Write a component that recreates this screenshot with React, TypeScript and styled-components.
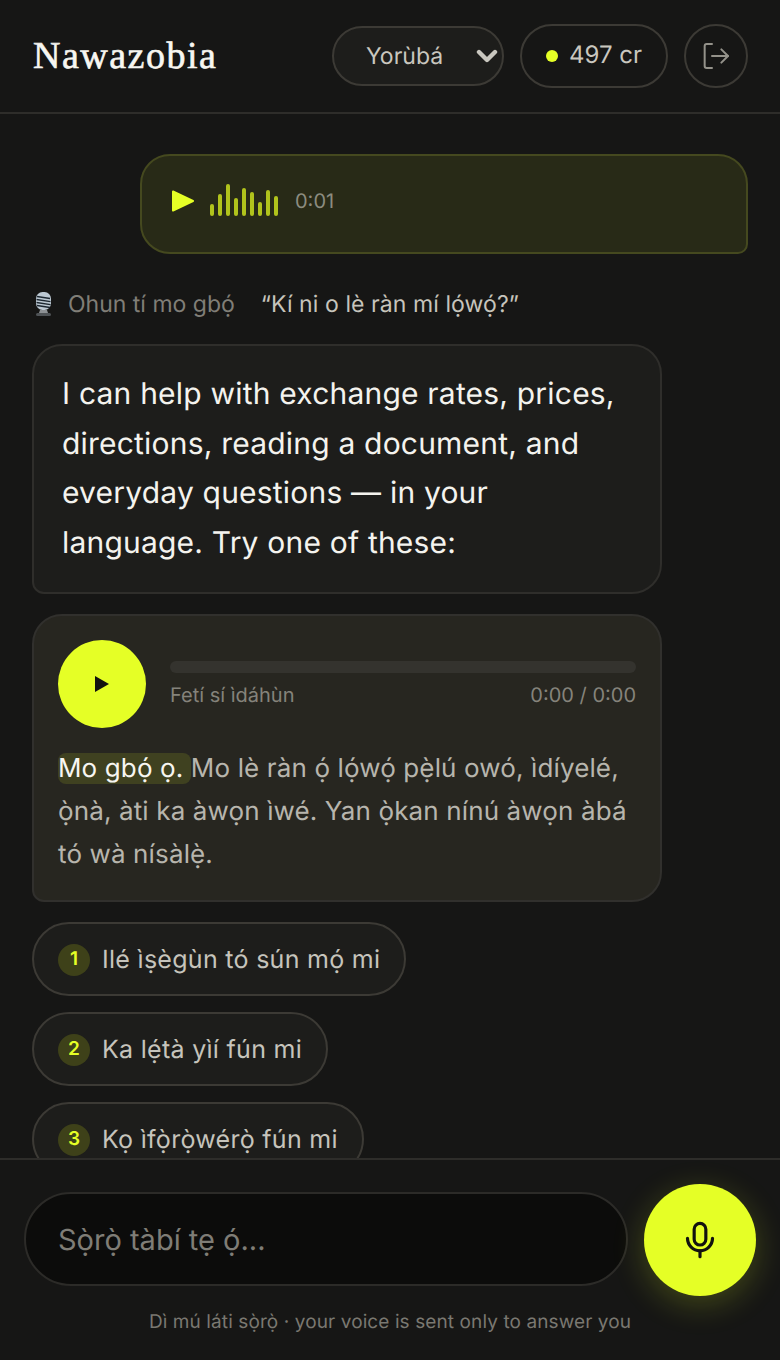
import React from "react";
import styled, { createGlobalStyle } from "styled-components";

const Global = createGlobalStyle`
  html, body { margin: 0; padding: 0; background: #161615; }
  * { box-sizing: border-box; }
  body { text-rendering: geometricPrecision; }
`;

const Page = styled.div`
  width: 780px;
  height: 1360px;
  display: flex;
  flex-direction: column;
  overflow: hidden;
  background: #161615;
  color: #f4f3ee;
  font-family: Inter, "Liberation Sans", sans-serif;
  text-rendering: geometricPrecision;
`;

const Header = styled.header`
  flex: none;
  height: 114px;
  display: flex;
  align-items: center;
  justify-content: space-between;
  padding: 0 32px;
  border-bottom: 2px solid #2e2d2a;
`;

const Logo = styled.div`
  margin-left: 1px;
  font-family: "Liberation Serif", serif;
  font-size: 38px;
  font-weight: 400;
  letter-spacing: 1.5px;
  color: #f7f6f1;
  -webkit-text-stroke: 0.6px #f7f6f1;
`;

const HeaderTools = styled.div`
  display: flex;
  align-items: center;
  gap: 16px;
`;

const LangWrap = styled.div`
  position: relative;
  width: 172px;
  height: 60px;
`;

const LangSelect = styled.select`
  appearance: none;
  width: 100%;
  height: 100%;
  padding: 0 40px 0 32px;
  border: 2px solid #3c3a35;
  border-radius: 30px;
  background: #1d1d1b;
  color: #c9c7bf;
  font-family: inherit;
  font-size: 23px;
  text-rendering: geometricPrecision;
`;

const Chevron = styled.svg`
  position: absolute;
  right: 6px;
  top: 21px;
  width: 22px;
  height: 18px;
  pointer-events: none;
`;

const Credits = styled.div`
  height: 64px;
  width: 148px;
  display: flex;
  align-items: center;
  gap: 11px;
  padding-left: 24px;
  border: 2px solid #3c3a35;
  border-radius: 32px;
  font-size: 24px;
  color: #c9c7bf;
`;

const CreditsText = styled.span`
  position: relative;
  top: -2px;
`;

const Dot = styled.span`
  width: 12px;
  height: 12px;
  border-radius: 50%;
  background: #e5ff26;
`;

const Logout = styled.button`
  width: 64px;
  height: 64px;
  padding: 0;
  display: flex;
  align-items: center;
  justify-content: center;
  border: 2px solid #3c3a35;
  border-radius: 50%;
  background: transparent;
  color: #94928a;
`;

const Messages = styled.main`
  flex: 1;
  min-height: 0;
  overflow: hidden;
  display: flex;
  flex-direction: column;
  align-items: flex-start;
  padding: 40px 32px 0;
`;

const VoiceBubble = styled.div`
  align-self: flex-end;
  width: 608px;
  height: 100px;
  flex: none;
  display: flex;
  align-items: center;
  padding: 0 30px 6px;
  gap: 16px;
  background: #282a17;
  border: 2px solid #45491f;
  border-radius: 30px 30px 10px 30px;
`;

const WaveBox = styled.div`
  display: flex;
  align-items: flex-end;
  gap: 4px;
  height: 32px;
  margin-bottom: 2px;
`;

const WaveBar = styled.span<{ $h: number }>`
  width: 4px;
  height: ${(p) => p.$h}px;
  border-radius: 2px;
  background: #b1c31c;
`;

const Duration = styled.span`
  margin-left: 1px;
  font-size: 20px;
  color: #8c8c80;
`;

const Heard = styled.div`
  flex: none;
  margin-top: 35px;
  height: 30px;
  display: flex;
  align-items: center;
  font-size: 23px;
  white-space: nowrap;
`;

const HeardLabel = styled.span`
  color: #807e77;
  margin: 0 26px 0 14px;
`;

const HeardQuote = styled.span`
  color: #c6c4bc;
  letter-spacing: 0.08px;
`;

const TextBubble = styled.div`
  flex: none;
  width: 630px;
  margin-top: 25px;
  padding: 24px 28px;
  background: #1d1d1b;
  border: 2px solid #2f2e2b;
  border-radius: 30px 30px 30px 12px;
  font-size: 30px;
  letter-spacing: 0.2px;
  line-height: 49.5px;
  color: #f4f3ee;
`;

const AudioCard = styled.div`
  flex: none;
  width: 630px;
  height: 288px;
  margin-top: 20px;
  padding: 24px;
  background: #272620;
  border: 2px solid #31302d;
  border-radius: 30px 30px 30px 12px;
`;

const PlayerRow = styled.div`
  display: flex;
  align-items: center;
  gap: 24px;
`;

const PlayButton = styled.button`
  flex: none;
  width: 88px;
  height: 88px;
  padding: 0;
  border: 0;
  border-radius: 50%;
  background: #e5ff26;
  display: flex;
  align-items: center;
  justify-content: center;
`;

const PlayerInfo = styled.div`
  flex: 1;
  display: flex;
  flex-direction: column;
  gap: 10px;
`;

const Track = styled.div`
  height: 12px;
  border-radius: 6px;
  background: #34332e;
`;

const TrackLabels = styled.div`
  display: flex;
  justify-content: space-between;
  font-size: 20px;
  color: #85837b;
`;

const CardText = styled.p`
  margin: 19px 0 0;
  font-size: 26px;
  letter-spacing: 0.13px;
  line-height: 43.2px;
  color: #b7b5ad;
`;

const Highlight = styled.span`
  background: #3f4120;
  border-radius: 8px;
  color: #f7f6f1;
`;

const Chips = styled.div`
  flex: none;
  margin-top: 20px;
  display: flex;
  flex-direction: column;
  align-items: flex-start;
  gap: 16px;
`;

const Chip = styled.button`
  height: 74px;
  padding: 1px 24px 0;
  display: flex;
  align-items: center;
  gap: 12px;
  border: 2px solid #3c3a35;
  border-radius: 37px;
  background: #1d1d1b;
  color: #c6c4bc;
  font-family: inherit;
  font-size: 25px;
  letter-spacing: 0.29px;
  white-space: nowrap;
  text-rendering: geometricPrecision;
`;

const ChipNumber = styled.span`
  width: 32px;
  height: 32px;
  border-radius: 50%;
  display: flex;
  align-items: center;
  justify-content: center;
  padding-bottom: 2px;
  background: #3e4119;
  color: #e5ff26;
  font-size: 19px;
  font-weight: 600;
  letter-spacing: 0;
`;

const Footer = styled.footer`
  flex: none;
  height: 202px;
  padding: 24px 24px 0;
  background: #161615;
  border-top: 2px solid #2e2d2a;
`;

const InputRow = styled.div`
  display: flex;
  align-items: center;
  gap: 16px;
`;

const InputBox = styled.input`
  flex: 1;
  min-width: 0;
  height: 94px;
  margin-bottom: 2px;
  padding: 0 32px;
  border: 2px solid #2c2b28;
  border-radius: 47px;
  background: #0c0c0b;
  color: #f4f3ee;
  font-family: inherit;
  font-size: 29px;
  text-rendering: geometricPrecision;
  &::placeholder { color: #7f7d76; opacity: 1; }
`;

const MicButton = styled.button`
  flex: none;
  width: 112px;
  height: 112px;
  padding: 0;
  border: 0;
  border-radius: 50%;
  background: #e5ff26;
  display: flex;
  align-items: center;
  justify-content: center;
  box-shadow: 0 8px 32px rgba(229, 255, 38, 0.22);
`;

const Hint = styled.div`
  margin-top: 14px;
  text-align: center;
  font-size: 19px;
  letter-spacing: 0.1px;
  color: #7a7871;
`;

const MicEmoji = () => (
  <svg width="22" height="26" viewBox="0 0 22 26" aria-hidden="true">
    <rect x="4" y="1" width="15" height="18" rx="6.5" fill="#bcc8d2" />
    <path d="M5 5.5l13 2M4.5 8.5l14 2.2M4.5 11.5l14 2.2M5 14.5l13 2" stroke="#1c2730" strokeWidth="1.3" />
    <path d="M8 19h7l1 3H7z" fill="#8d9194" />
    <rect x="4" y="22" width="15" height="3" rx="1.5" fill="#4f5356" />
  </svg>
);

const bars = [12, 22, 32, 18, 28, 24, 14, 26, 20];

export default function App() {
  return (
    <Page>
      <Global />
      <Header>
        <Logo>Nawazobia</Logo>
        <HeaderTools>
          <LangWrap>
            <LangSelect defaultValue="yo" aria-label="Language">
              <option value="yo">Yorùbá</option>
            </LangSelect>
            <Chevron viewBox="0 0 22 18">
              <path d="M3 5l8 8 8-8" fill="none" stroke="#c9c7bf" strokeWidth="4.4" strokeLinecap="round" strokeLinejoin="round" />
            </Chevron>
          </LangWrap>
          <Credits>
            <Dot />
            <CreditsText>497 cr</CreditsText>
          </Credits>
          <Logout aria-label="Log out">
            <svg width="32" height="32" viewBox="0 0 24 24" fill="none" stroke="currentColor" strokeWidth="1.5" strokeLinecap="round" strokeLinejoin="round">
              <path d="M9 3H5a1.5 1.5 0 0 0-1.5 1.5v15A1.5 1.5 0 0 0 5 21h4" />
              <path d="M16 17l5-5-5-5" />
              <path d="M21 12H9" />
            </svg>
          </Logout>
        </HeaderTools>
      </Header>
      <Messages>
        <VoiceBubble>
          <svg width="22" height="22" viewBox="0 0 22 22">
            <path d="M1 1.5 21 11 1 20.5Z" fill="#e5ff26" stroke="#e5ff26" strokeWidth="2" strokeLinejoin="round" />
          </svg>
          <WaveBox>
            {bars.map((h, i) => (
              <WaveBar key={i} $h={h} />
            ))}
          </WaveBox>
          <Duration>0:01</Duration>
        </VoiceBubble>
        <Heard>
          <MicEmoji />
          <HeardLabel>Ohun tí mo gbọ́</HeardLabel>
          <HeardQuote>“Kí ni o lè ràn mí lọ́wọ́?”</HeardQuote>
        </Heard>
        <TextBubble>
          I can help with exchange rates, prices, directions, reading a document, and everyday questions — in your language. Try one of these:
        </TextBubble>
        <AudioCard>
          <PlayerRow>
            <PlayButton aria-label="Play">
              <svg width="14" height="16" viewBox="0 0 14 16">
                <path d="M0 0 14 8 0 16Z" fill="#12120f" />
              </svg>
            </PlayButton>
            <PlayerInfo>
              <Track />
              <TrackLabels>
                <span>Fetí sí ìdáhùn</span>
                <span>0:00 / 0:00</span>
              </TrackLabels>
            </PlayerInfo>
          </PlayerRow>
          <CardText>
            <Highlight>Mo gbọ́ ọ. </Highlight>Mo lè ràn ọ́ lọ́wọ́ pẹ̀lú owó, ìdíyelé, ọ̀nà, àti ka àwọn ìwé. Yan ọ̀kan nínú àwọn àbá tó wà nísàlẹ̀.
          </CardText>
        </AudioCard>
        <Chips>
          <Chip><ChipNumber>1</ChipNumber>Ilé ìṣègùn tó sún mọ́ mi</Chip>
          <Chip><ChipNumber>2</ChipNumber>Ka lẹ́tà yìí fún mi</Chip>
          <Chip><ChipNumber>3</ChipNumber>Kọ ìfọ̀rọ̀wérọ̀ fún mi</Chip>
        </Chips>
      </Messages>
      <Footer>
        <InputRow>
          <InputBox placeholder="Sọ̀rọ̀ tàbí tẹ ọ́..." />
          <MicButton aria-label="Record">
            <svg width="40" height="40" viewBox="0 0 24 24" fill="none" stroke="#12120f" strokeWidth="1.9" strokeLinecap="round" strokeLinejoin="round">
              <rect x="8.5" y="2" width="7" height="13" rx="3.5" />
              <path d="M4.5 11a7.5 7.5 0 0 0 15 0" />
              <path d="M12 18.5V22" />
            </svg>
          </MicButton>
        </InputRow>
        <Hint>Dì mú láti sọ̀rọ̀ · your voice is sent only to answer you</Hint>
      </Footer>
    </Page>
  );
}
